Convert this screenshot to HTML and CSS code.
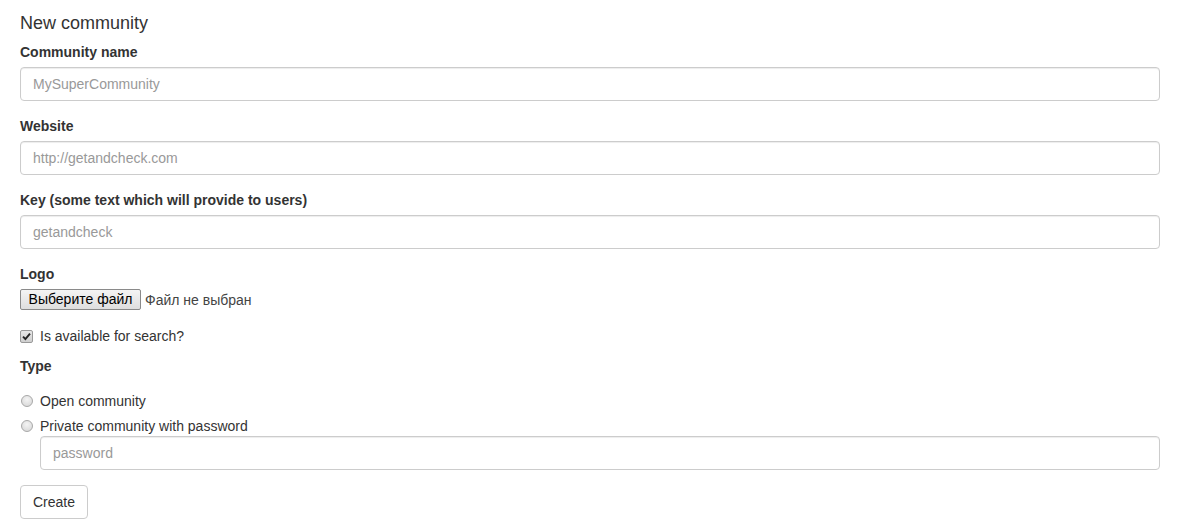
FILE: index.html
```html
<!DOCTYPE html>
<html>
<head>
<meta charset="utf-8">
<link rel="stylesheet" href="styles.css">
</head>
<body>
<div class="page">
  <h4 class="title">New community</h4>
  <form class="form">
    <div class="form-group">
      <label class="label">Community name</label>
      <input class="form-control" type="text" placeholder="MySuperCommunity">
    </div>
    <div class="form-group">
      <label class="label">Website</label>
      <input class="form-control" type="text" placeholder="http://getandcheck.com">
    </div>
    <div class="form-group">
      <label class="label">Key (some text which will provide to users)</label>
      <input class="form-control" type="text" placeholder="getandcheck">
    </div>
    <div class="form-group">
      <label class="label">Logo</label>
      <div class="file">
        <span class="file-btn">Выберите файл</span>
        <span class="file-text">Файл не выбран</span>
      </div>
    </div>
    <div class="checkbox">
      <span class="check-box">
        <svg width="9" height="9" viewBox="0 0 9 9"><path d="M1 4.6 L3.4 7 L8 1.6" fill="none" stroke="#222" stroke-width="1.9"/></svg>
      </span>
      <span class="opt-text">Is available for search?</span>
    </div>
    <div class="type-group">
      <label class="label">Type</label>
      <div class="radio radio-first"><span class="radio-dot"></span><span class="opt-text">Open community</span></div>
      <div class="radio radio-last"><span class="radio-dot"></span><span class="opt-text">Private community with password</span></div>
      <div class="indent">
        <input class="form-control" type="password" placeholder="password">
      </div>
    </div>
    <button class="btn" type="button">Create</button>
  </form>
</div>
</body>
</html>
```
FILE: styles.css
```css
* { box-sizing: border-box; }
html, body { margin: 0; padding: 0; background: #fff; }
body {
  font-family: "Liberation Sans", Arial, Helvetica, sans-serif;
  font-size: 14px;
  line-height: 20px;
  color: #333;
}
.page {
  padding: 2px 26px 0 20px;
}
.title {
  font-size: 18px;
  font-weight: normal;
  line-height: 19.8px;
  margin: 12px 0 8px;
  color: #333;
}
.form { margin: 0; }
.form-group { margin-bottom: 15px; }
.label {
  display: block;
  font-weight: bold;
  margin-bottom: 5px;
  color: #333;
}
.form-control {
  display: block;
  width: 100%;
  height: 34px;
  padding: 6px 12px;
  font-family: inherit;
  font-size: 14px;
  line-height: 20px;
  color: #555;
  background: #fff;
  border: 1px solid #ccc;
  border-radius: 4px;
  box-shadow: inset 0 1px 1px rgba(0,0,0,.075);
  outline: none;
}
.form-control::placeholder { color: #999; }
.file {
  display: flex;
  align-items: center;
  height: 22px;
}
.file-btn {
  display: inline-block;
  height: 21px;
  line-height: 19px;
  padding: 0 7px;
  font-size: 14px;
  color: #000;
  border: 1px solid #8a8a8a;
  border-radius: 2px;
  background: linear-gradient(#f4f4f4, #dedede);
  width: 121px;
  text-align: center;
  white-space: nowrap;
}
.file-text {
  margin-left: 4px;
  font-size: 14px;
  color: #444;
}
.checkbox {
  display: flex;
  align-items: center;
  height: 20px;
  margin: 0 0 10px;
  padding-top: 1px;
}
.check-box {
  width: 13px;
  height: 13px;
  border: 1px solid #999;
  border-radius: 2px;
  background: linear-gradient(#e6e6e6, #cfcfcf);
  display: flex;
  align-items: center;
  justify-content: center;
}
.opt-text {
  margin-left: 7px;
  color: #333;
  font-size: 14px;
}
.type-group { margin-bottom: 15px; }
.type-group .label { margin-bottom: 0; }
.radio {
  display: flex;
  align-items: center;
  height: 20px;
}
.radio-first { margin-top: 15px; }
.radio-last { margin-top: 5px; }
.radio-dot {
  width: 12px;
  height: 12px;
  margin-left: 1px;
  border-radius: 50%;
  border: 1px solid #a8a8a8;
  background: radial-gradient(circle at 50% 35%, #f4f4f4, #d4d4d4);
}
.radio .opt-text { margin-left: 7px; }
.indent { padding-left: 20px; }
.btn {
  display: inline-block;
  height: 34px;
  padding: 6px 12px;
  font-family: inherit;
  font-size: 14px;
  line-height: 20px;
  color: #333;
  background: #fff;
  border: 1px solid #ccc;
  border-radius: 4px;
}
```
